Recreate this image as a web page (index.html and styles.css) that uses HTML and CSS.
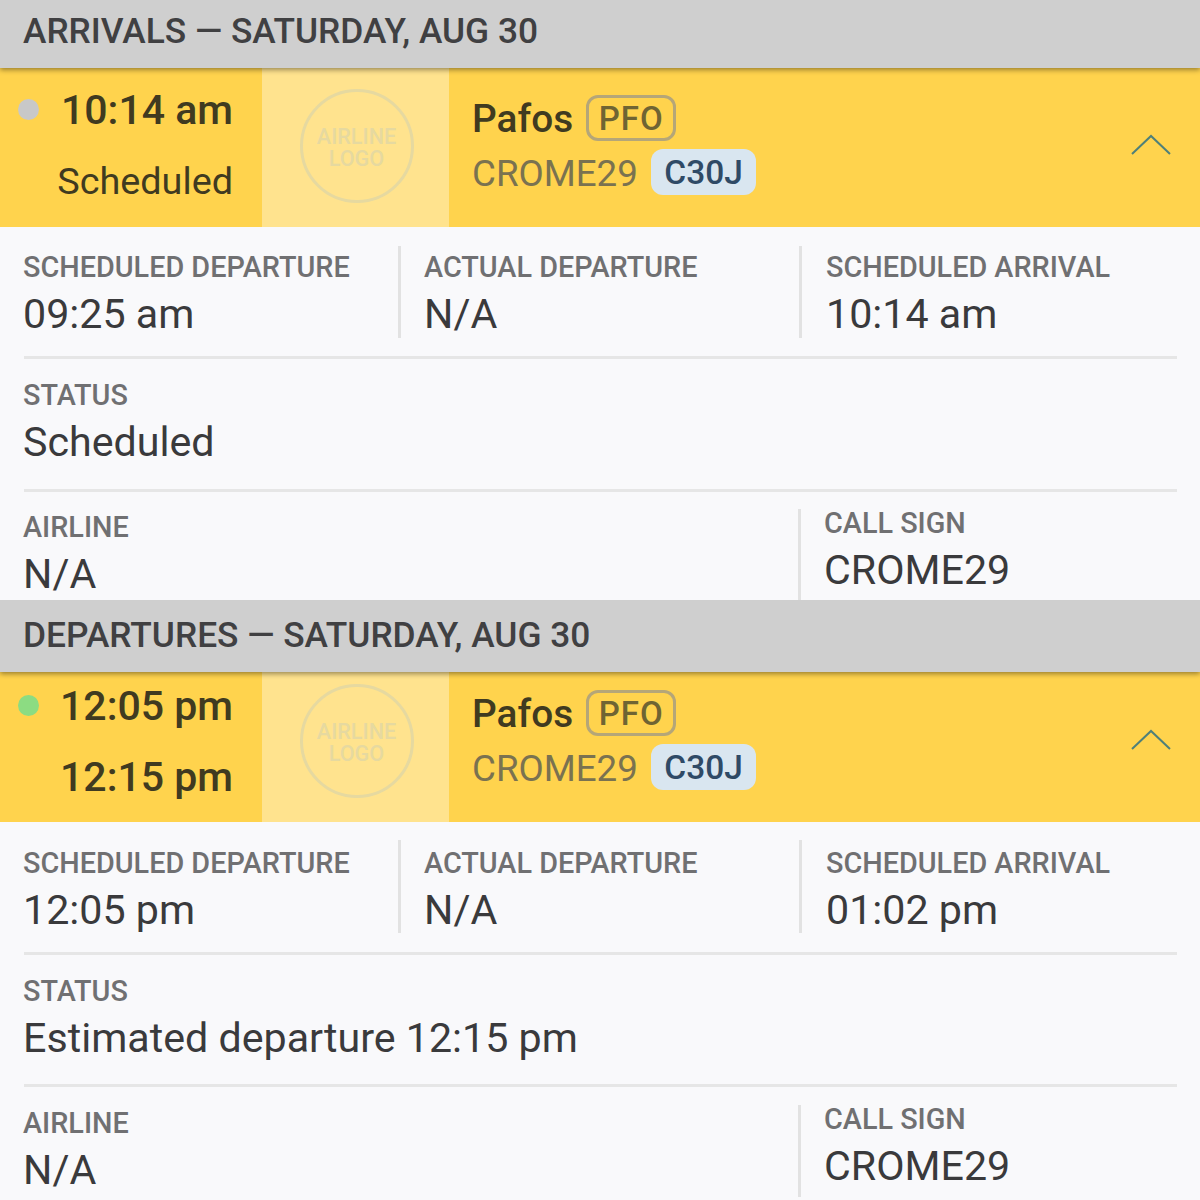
FILE: index.html
```html
<!DOCTYPE html>
<html lang="en">
<head>
<meta charset="utf-8">
<title>Flights</title>
<link rel="stylesheet" href="styles.css">
</head>
<body>
<section class="board board-arr">
  <h2 class="band">ARRIVALS — SATURDAY, AUG 30</h2>
  <div class="flight flight-arr">
    <div class="times">
      <span class="dot dot-grey"></span>
      <div class="time">10:14 am</div>
      <div class="state">Scheduled</div>
    </div>
    <div class="logo-cell"><div class="logo">AIRLINE<br>LOGO</div></div>
    <div class="route">
      <div class="line"><span class="city">Pafos</span><span class="iata">PFO</span></div>
      <div class="line line-2"><span class="sign">CROME29</span><span class="type">C30J</span></div>
    </div>
    <svg class="chev" width="40" height="22" viewBox="0 0 40 22"><path d="M1 20 L20 2 L39 20" fill="none" stroke="#4f8079" stroke-width="2"/></svg>
  </div>
  <div class="details">
    <div class="triple">
      <div class="cell"><div class="label">SCHEDULED DEPARTURE</div><div class="value">09:25 am</div></div>
      <div class="cell"><div class="label">ACTUAL DEPARTURE</div><div class="value">N/A</div></div>
      <div class="cell"><div class="label">SCHEDULED ARRIVAL</div><div class="value">10:14 am</div></div>
    </div>
    <div class="single"><div class="label">STATUS</div><div class="value">Scheduled</div></div>
    <div class="pair">
      <div class="cell-wide"><div class="label">AIRLINE</div><div class="value">N/A</div></div>
      <div class="cell-sign"><div class="label">CALL SIGN</div><div class="value">CROME29</div></div>
    </div>
  </div>
</section>
<section class="board board-dep">
  <h2 class="band">DEPARTURES — SATURDAY, AUG 30</h2>
  <div class="flight flight-dep">
    <div class="times">
      <span class="dot dot-green"></span>
      <div class="time">12:05 pm</div>
      <div class="time time-2">12:15 pm</div>
    </div>
    <div class="logo-cell"><div class="logo">AIRLINE<br>LOGO</div></div>
    <div class="route">
      <div class="line"><span class="city">Pafos</span><span class="iata">PFO</span></div>
      <div class="line line-2"><span class="sign">CROME29</span><span class="type">C30J</span></div>
    </div>
    <svg class="chev" width="40" height="22" viewBox="0 0 40 22"><path d="M1 20 L20 2 L39 20" fill="none" stroke="#4f8079" stroke-width="2"/></svg>
  </div>
  <div class="details">
    <div class="triple">
      <div class="cell"><div class="label">SCHEDULED DEPARTURE</div><div class="value">12:05 pm</div></div>
      <div class="cell"><div class="label">ACTUAL DEPARTURE</div><div class="value">N/A</div></div>
      <div class="cell"><div class="label">SCHEDULED ARRIVAL</div><div class="value">01:02 pm</div></div>
    </div>
    <div class="single"><div class="label">STATUS</div><div class="value">Estimated departure 12:15 pm</div></div>
    <div class="pair">
      <div class="cell-wide"><div class="label">AIRLINE</div><div class="value">N/A</div></div>
      <div class="cell-sign"><div class="label">CALL SIGN</div><div class="value">CROME29</div></div>
    </div>
  </div>
</section>
</body>
</html>
```
FILE: styles.css
```css
* { box-sizing: border-box; }
html, body { margin: 0; padding: 0; }
body { width: 1200px; height: 1200px; overflow: hidden; background: #f9f9fb; font-family: Roboto, "Liberation Sans", sans-serif; color: #3a3a3c; }
.board { overflow: hidden; }
.board-arr { height: 600px; }
.board-dep { height: 600px; }
.band { margin: 0; height: 68px; padding: 0 24px 7px 23px; display: flex; align-items: center; background: #cfcfcf; font-size: 35.3px; font-weight: 500; color: #404042; box-shadow: 0 2px 5px rgba(0,0,0,.4); position: relative; z-index: 1; }
.board-dep .band { height: 72px; padding-bottom: 3px; }
.flight { display: flex; background: #ffd34d; align-items: stretch; }
.flight-arr { height: 159px; }
.flight-dep { height: 150px; }
.times { width: 262px; flex: none; padding-right: 29px; position: relative; text-align: right; }
.dot { position: absolute; left: 17.5px; top: 31px; width: 21px; height: 21px; border-radius: 50%; }
.flight-dep .dot { top: 23px; }
.dot-grey { background: #c8c8c8; }
.dot-green { background: #8cdc82; }
.time { font-size: 41px; font-weight: 500; color: #403a20; margin-top: 18px; line-height: 48px; }
.flight-dep .time { margin-top: 10px; }
.flight-dep .time-2 { margin-top: 23px; }
.state { font-size: 37.8px; color: #403a20; line-height: 46px; margin-top: 24px; }
.logo-cell { width: 187px; flex: none; background: #ffe38e; display: flex; justify-content: center; padding: 21px 0 0 2px; }
.flight-dep .logo-cell { padding-top: 12px; }
.logo { width: 114px; height: 114px; border: 3px solid #e6d9a0; border-radius: 50%; display: flex; align-items: center; justify-content: center; text-align: center; font-size: 21.6px; line-height: 22px; font-weight: 500; color: #e6d9a0; padding-top: 3px; }
.route { flex: 1; padding: 26px 0 0 23px; }
.flight-dep .route { padding-top: 17px; }
.line { display: flex; align-items: center; height: 48px; }
.line-2 { margin-top: 6px; }
.city { font-size: 38.8px; font-weight: 500; color: #403a20; }
.iata { margin-left: 13px; font-size: 33px; font-weight: 500; color: #6f6433; border: 3px solid #b5a678; border-radius: 12px; height: 46px; padding: 0 9.5px; display: flex; align-items: center; letter-spacing: 1px; }
.sign { font-size: 36.7px; color: #7a7250; padding-top: 2px; }
.type { margin-left: 13px; font-size: 33.5px; font-weight: 500; color: #2f4a66; background: #d9e6f0; border-radius: 12px; height: 46px; padding: 0 13.5px; display: flex; align-items: center; }
.chev { flex: none; margin: 66px 29px 0 0; }
.flight-dep .chev { margin-top: 57px; }
.details { padding: 0 23px 0 24px; }
.triple { display: flex; padding: 19px 0 18px; border-bottom: 3px solid #e6e6e6; }
.board-dep .triple { padding: 18px 0 19px; }
.cell { width: 401px; flex: none; height: 92px; border-right: 3px solid #e2e2e2; padding: 1px 0 0 24px; }
.board-dep .cell { height: 93px; padding-top: 3px; }
.cell:first-child { width: 377px; padding-left: 0; }
.cell:last-child { border-right: 0; padding-left: 25px; }
.label { font-size: 28.8px; font-weight: 500; color: #707072; line-height: 40px; margin-left: -1px; }
.value { font-size: 41.2px; color: #3a3a3c; line-height: 54px; margin-left: -1px; }
.single { height: 133px; padding-top: 16px; border-bottom: 3px solid #e6e6e6; }
.board-dep .single { height: 132px; }
.pair { display: flex; padding-top: 17px; }
.board-dep .pair { padding-top: 18px; }
.cell-wide { width: 774px; margin-top: -2px; }
.cell-sign { border-left: 3px solid #e2e2e2; padding-left: 24px; height: 92px; }
.cell-sign .label { margin-top: -6px; }
```
